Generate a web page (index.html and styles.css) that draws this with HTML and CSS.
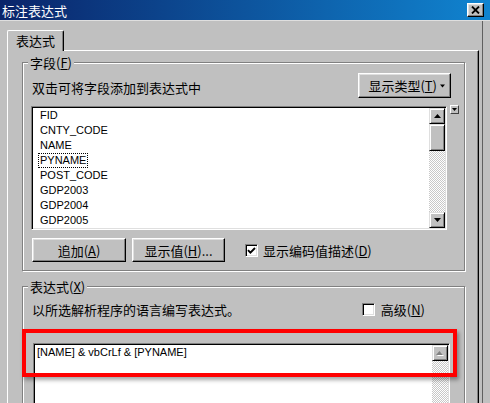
FILE: index.html
```html
<!DOCTYPE html>
<html lang="zh-CN">
<head>
<meta charset="utf-8">
<title>标注表达式</title>
<link rel="stylesheet" href="styles.css">
</head>
<body>
<div class="window">
  <div class="titlebar">
    <span class="title">标注表达式</span>
    <span class="close"><svg width="9" height="8" viewBox="0 0 9 8"><path d="M1 0.5 L8 7.5 M8 0.5 L1 7.5" stroke="#000" stroke-width="1.8" fill="none"/></svg></span>
  </div>
  <div class="client">
    <div class="tabs"><div class="tab">表达式</div></div>
    <div class="panel">
      <div class="group g1">
        <div class="legend">字段(<u>F</u>)</div>
        <div class="row1">
          <span class="hint">双击可将字段添加到表达式中</span>
          <button class="btn btn-type"><span>显示类型(<u>T</u>)</span><svg class="caret" width="7" height="4" viewBox="0 0 7 4"><path d="M1 0.5h5L3.5 3.5z" fill="#000"/></svg></button>
        </div>
        <div class="listrow">
          <div class="listbox">
            <ul class="items">
              <li>FID</li>
              <li>CNTY_CODE</li>
              <li>NAME</li>
              <li class="focus">PYNAME</li>
              <li>POST_CODE</li>
              <li>GDP2003</li>
              <li>GDP2004</li>
              <li>GDP2005</li>
            </ul>
            <div class="vscroll">
              <span class="sb-btn"><svg width="7" height="4" viewBox="0 0 7 4"><path d="M3.5 0L7 4H0z" fill="#000"/></svg></span>
              <span class="sb-thumb"></span>
              <span class="sb-track"></span>
              <span class="sb-btn"><svg width="7" height="4" viewBox="0 0 7 4"><path d="M0 0h7L3.5 4z" fill="#000"/></svg></span>
            </div>
          </div>
          <span class="mini"><svg width="5" height="3" viewBox="0 0 5 3"><path d="M0 0h5L2.5 3z" fill="#000"/></svg></span>
        </div>
        <div class="btnrow">
          <button class="btn btn-add"><span>追加(<u>A</u>)</span></button>
          <button class="btn btn-values"><span>显示值(<u>H</u>)...</span></button>
          <label class="check"><span class="box"><svg width="9" height="9" viewBox="0 0 9 9"><path d="M1 4.2 L3.4 6.6 L8 2" stroke="#000" stroke-width="1.9" fill="none"/></svg></span><span>显示编码值描述(<u>D</u>)</span></label>
        </div>
      </div>
      <div class="group g2">
        <div class="legend">表达式(<u>X</u>)</div>
        <div class="row2">
          <span class="hint">以所选解析程序的语言编写表达式。</span>
          <label class="check adv"><span class="box"></span><span>高级(<u>N</u>)</span></label>
        </div>
        <div class="editor">
          <div class="code">[NAME] &amp; vbCrLf &amp; [PYNAME]</div>
          <div class="vscroll">
            <span class="sb-btn"><svg width="8" height="5" viewBox="0 0 8 5"><path d="M4.5 1L8 5H1z" fill="#fff"/><path d="M3.5 0L7 4H0z" fill="#808080"/></svg></span>
            <span class="sb-track"></span>
          </div>
        </div>
      </div>
    </div>
  </div>
</div>
<div class="highlight"></div>
</body>
</html>
```
FILE: styles.css
```css
* { box-sizing: border-box; }
html, body { margin: 0; padding: 0; }
body {
  width: 490px;
  height: 403px;
  overflow: hidden;
  position: relative;
  background: #c0c0c0;
  color: #000;
  font: 13px/15px "Noto Sans CJK SC", "Liberation Sans", sans-serif;
}
u { text-decoration: underline; text-underline-offset: 1px; }

.window { height: 403px; overflow: hidden; }

.titlebar {
  height: 21px;
  border-bottom: 1px solid #dfdfdf;
  background: linear-gradient(to right, #0a246a, #1084d0);
  display: flex;
  align-items: center;
  justify-content: space-between;
  padding: 0 6px 0 2px;
  color: #fff;
}
.title { font-size: 13px; line-height: 15px; }
.close {
  width: 17px;
  height: 14px;
  background: #c0c0c0;
  border: 1px solid;
  border-color: #fff #000 #000 #fff;
  box-shadow: inset -1px -1px #808080, inset 1px 1px #dfdfdf;
  display: flex;
  align-items: center;
  justify-content: center;
}

.client {
  width: 483px;
  height: 382px;
  padding: 9px 0 0 7px;
  border-right: 1px solid #606060;
}
.tabs { display: flex; height: 20px; }
.tab {
  position: relative;
  z-index: 1;
  width: 57px;
  height: 21px;
  background: #c0c0c0;
  border-top: 1px solid #fff;
  border-left: 1px solid #fff;
  border-right: 1px solid #000;
  box-shadow: inset -1px 0 #808080;
  border-radius: 2px 2px 0 0;
  text-align: center;
  padding-top: 2px;
  line-height: 15px;
}
.panel {
  width: 472px;
  height: 353px;
  overflow: hidden;
  border-top: 1px solid #fff;
  border-left: 1px solid #fff;
  border-right: 1px solid #000;
  box-shadow: inset -1px 0 #808080;
  padding: 11px 13px 0 14px;
}

.group {
  border: 1px solid #808080;
  box-shadow: inset 1px 1px #fff, 1px 1px #fff;
  padding: 0 13px 8px 8px;
}
.g2 { margin-top: 15px; height: 130px; }
.legend {
  width: fit-content;
  margin: -7px 0 0 -3px;
  padding: 0 2px;
  background: #c0c0c0;
  line-height: 13px;
}

.row1 {
  margin-top: 4px;
  display: flex;
  align-items: center;
  justify-content: space-between;
}
.hint { padding: 4px 0 0 1px; }
.btn {
  margin: 0;
  padding: 0;
  font: inherit;
  color: #000;
  background: #c0c0c0;
  border: 1px solid;
  border-color: #fff #000 #000 #fff;
  box-shadow: inset -1px -1px #808080, inset 1px 1px #dfdfdf;
  display: flex;
  align-items: center;
  justify-content: center;
  line-height: 15px;
}
.btn-type {
  width: 93px;
  height: 25px;
  justify-content: flex-end;
  padding-right: 4px;
}
.caret { margin-left: 2px; }

.listrow {
  margin-top: 8px;
  display: flex;
  align-items: flex-start;
}
.listbox {
  flex-shrink: 0;
  width: 416px;
  height: 124px;
  padding: 1px;
  background: #fff;
  border: 1px solid;
  border-color: #808080 #fff #fff #808080;
  box-shadow: inset 1px 1px #000, inset -1px -1px #dfdfdf;
  display: flex;
}
.items {
  flex: 1;
  margin: 0;
  padding: 0;
  list-style: none;
  overflow: hidden;
  font: 11px/15px "Liberation Sans", Arial, sans-serif;
}
.items li {
  width: fit-content;
  margin-left: 5px;
  padding: 0 2px;
  height: 15px;
}
.items li.focus { outline: 1px dotted #000; outline-offset: -1px; }

.vscroll { width: 16px; display: flex; flex-direction: column; flex-shrink: 0; }
.sb-btn, .sb-thumb {
  background: #c0c0c0;
  border: 1px solid;
  border-color: #dfdfdf #000 #000 #dfdfdf;
  box-shadow: inset 1px 1px #fff, inset -1px -1px #808080;
  display: flex;
  align-items: center;
  justify-content: center;
}
.sb-btn { height: 16px; }
.sb-thumb { height: 27px; }
.sb-track {
  flex: 1;
  background: repeating-conic-gradient(#fff 0 25%, #c8c8c8 0 50%) 0 0 / 2px 2px;
}

.mini {
  flex-shrink: 0;
  width: 9px;
  height: 9px;
  margin: -1px 0 0 3px;
  background: #c0c0c0;
  border: 1px solid;
  border-color: #fff #404040 #404040 #fff;
  display: flex;
  align-items: center;
  justify-content: center;
}

.btnrow {
  margin-top: 8px;
  display: flex;
  align-items: center;
  padding-left: 1px;
}
.btn-add { width: 94px; height: 24px; }
.btn-values { width: 93px; height: 24px; margin-left: 6px; }
.check { display: flex; align-items: center; gap: 5px; line-height: 15px; }
.btnrow .check { margin-left: 20px; }
.box {
  width: 13px;
  height: 13px;
  background: #fff;
  border: 1px solid;
  border-color: #808080 #fff #fff #808080;
  box-shadow: inset 1px 1px #000, inset -1px -1px #dfdfdf;
  display: flex;
  align-items: center;
  justify-content: center;
}
.adv { gap: 6px; margin-right: 26px; }

.row2 {
  margin-top: 8px;
  height: 16px;
  display: flex;
  align-items: center;
  justify-content: space-between;
}
.row2 .hint { padding: 0 0 0 1px; }

.editor {
  margin: 26px 0 0 2px;
  width: 417px;
  height: 70px;
  padding: 1px;
  background: #fff;
  border: 1px solid;
  border-color: #808080 #fff #fff #808080;
  box-shadow: inset 1px 1px #000, inset -1px -1px #dfdfdf;
  display: flex;
}
.code {
  flex: 1;
  padding: 1px 2px;
  font: 11px/13px "Liberation Sans", Arial, sans-serif;
}

.highlight {
  position: absolute;
  left: 22px;
  top: 329px;
  width: 435px;
  height: 48px;
  border: 4px solid #ff0000;
  box-shadow: 2px 3px 4px rgba(0, 0, 0, 0.35);
}
```
